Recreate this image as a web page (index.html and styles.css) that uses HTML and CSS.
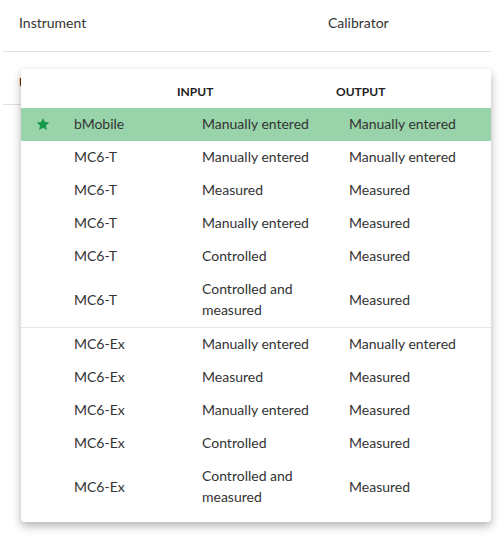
FILE: index.html
```html
<!DOCTYPE html>
<html>
<head>
<meta charset="utf-8">
<link rel="stylesheet" href="styles.css">
</head>
<body>
<div class="page">
  <div class="bg-head">
    <span class="bg-col1">Instrument</span>
    <span class="bg-col2">Calibrator</span>
  </div>
  <div class="bg-row"><span class="bg-bold">Unit</span></div>

  <div class="popup">
    <div class="popup-head">
      <span></span>
      <span>INPUT</span>
      <span>OUTPUT</span>
    </div>
    <div class="group">
      <div class="row selected">
        <span class="star"><svg width="14" height="14" viewBox="0 0 24 24"><path d="M12 1.5l3.1 7.2 7.8.7-5.9 5.2 1.8 7.7L12 18.3l-6.8 4 1.8-7.7-5.9-5.2 7.8-.7z" fill="#14984a"/></svg></span>
        <span>bMobile</span><span>Manually entered</span><span>Manually entered</span>
      </div>
      <div class="row"><span></span><span>MC6-T</span><span>Manually entered</span><span>Manually entered</span></div>
      <div class="row"><span></span><span>MC6-T</span><span>Measured</span><span>Measured</span></div>
      <div class="row"><span></span><span>MC6-T</span><span>Manually entered</span><span>Measured</span></div>
      <div class="row"><span></span><span>MC6-T</span><span>Controlled</span><span>Measured</span></div>
      <div class="row"><span></span><span>MC6-T</span><span class="wrap">Controlled and measured</span><span>Measured</span></div>
    </div>
    <div class="group sep">
      <div class="row"><span></span><span>MC6-Ex</span><span>Manually entered</span><span>Manually entered</span></div>
      <div class="row"><span></span><span>MC6-Ex</span><span>Measured</span><span>Measured</span></div>
      <div class="row"><span></span><span>MC6-Ex</span><span>Manually entered</span><span>Measured</span></div>
      <div class="row"><span></span><span>MC6-Ex</span><span>Controlled</span><span>Measured</span></div>
      <div class="row"><span></span><span>MC6-Ex</span><span class="wrap">Controlled and measured</span><span>Measured</span></div>
    </div>
  </div>
</div>
</body>
</html>
```
FILE: styles.css
```css
html, body {
  margin: 0;
  padding: 0;
  background: #fff;
}
body {
  font-family: Lato, "Open Sans", sans-serif;
  font-size: 14px;
  color: #333;
}
.page {
  position: relative;
  width: 502px;
  height: 536px;
  overflow: hidden;
}
.bg-head {
  margin-left: 3px;
  width: 488px;
  height: 52px;
  box-sizing: border-box;
  border-bottom: 1px solid #e2e2e2;
  display: flex;
  align-items: center;
  padding-bottom: 7px;
}
.bg-col1 {
  padding-left: 16px;
  width: 309px;
}
.bg-row {
  margin-left: 3px;
  width: 488px;
  height: 53px;
  box-sizing: border-box;
  border-bottom: 1px solid #e2e2e2;
  display: flex;
  align-items: center;
  padding-top: 9px;
}
.bg-bold {
  padding-left: 16px;
  font-weight: 700;
  color: #111;
}
.popup {
  position: absolute;
  left: 21px;
  top: 69px;
  width: 470px;
  background: #fff;
  border-radius: 4px;
  box-shadow: 0 4px 10px rgba(0, 0, 0, 0.3);
  padding-bottom: 8px;
}
.popup-head {
  display: grid;
  grid-template-columns: 156px 159px 1fr;
  height: 39px;
  align-items: center;
  font-size: 12px;
  font-weight: 700;
  color: #222;
  padding-top: 5px;
  box-sizing: border-box;
}
.group.sep {
  border-top: 1px solid #e6e6e6;
}
.row {
  display: grid;
  grid-template-columns: 53px 128px 147px 1fr;
  align-items: center;
  padding: 5px 0 7px;
  line-height: 21px;
}
.row.selected {
  background: #98d3a9;
}
.star {
  display: flex;
  justify-content: flex-start;
  padding-left: 15px;
  padding-top: 1px;
}
.wrap {
  max-width: 110px;
}
```
